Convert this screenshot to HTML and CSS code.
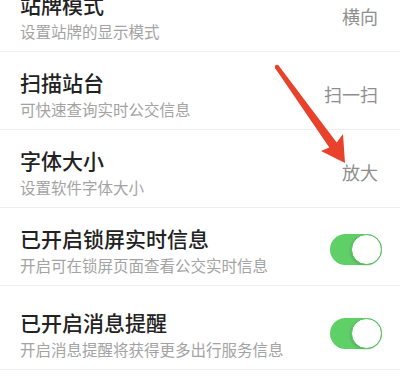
FILE: index.html
```html
<!DOCTYPE html>
<html lang="zh-CN">
<head>
<meta charset="utf-8">
<link rel="stylesheet" href="styles.css">
</head>
<body>
<div class="screen">
  <ul class="settings">
    <li class="row">
      <div class="text">
        <div class="title">站牌模式</div>
        <div class="sub">设置站牌的显示模式</div>
      </div>
      <span class="value">横向</span>
    </li>
    <li class="row">
      <div class="text">
        <div class="title">扫描站台</div>
        <div class="sub">可快速查询实时公交信息</div>
      </div>
      <span class="value">扫一扫</span>
    </li>
    <li class="row">
      <div class="text">
        <div class="title">字体大小</div>
        <div class="sub">设置软件字体大小</div>
      </div>
      <span class="value">放大</span>
    </li>
    <li class="row">
      <div class="text">
        <div class="title">已开启锁屏实时信息</div>
        <div class="sub">开启可在锁屏页面查看公交实时信息</div>
      </div>
      <span class="toggle on"><span class="knob"></span></span>
    </li>
    <li class="row row-last">
      <div class="text">
        <div class="title">已开启消息提醒</div>
        <div class="sub">开启消息提醒将获得更多出行服务信息</div>
      </div>
      <span class="toggle on"><span class="knob"></span></span>
    </li>
  </ul>
  <svg class="arrow" width="400" height="384" viewBox="0 0 400 384" aria-hidden="true">
    <circle cx="277" cy="67" r="2.2" fill="#e8412c"/>
    <polygon fill="#e8412c" points="275.2,68.3 278.8,65.7 336.7,142.4 343,134 345,163 321,151 329.3,147.6"/>
  </svg>
</div>
</body>
</html>
```
FILE: styles.css
```css
* { box-sizing: border-box; }
html, body {
  margin: 0;
  padding: 0;
  background: #ffffff;
}
body {
  font-family: "Noto Sans CJK SC", "Noto Sans", sans-serif;
  width: 400px;
  height: 384px;
  overflow: hidden;
}
.screen {
  position: relative;
  width: 400px;
  height: 384px;
  overflow: hidden;
}
.settings {
  list-style: none;
  margin: -26px 0 0 0;
  padding: 0;
}
.row {
  display: flex;
  align-items: center;
  justify-content: space-between;
  height: 78px;
  padding: 16px 18px 10px 20px;
  border-bottom: 1px solid #efefef;
}
.row-last {
  padding-top: 22px;
  height: 84px;
}
.text {
  display: flex;
  flex-direction: column;
}
.title {
  font-size: 21px;
  line-height: 27px;
  font-weight: 500;
  color: #222222;
}
.sub {
  margin-top: 3px;
  font-size: 15.5px;
  line-height: 20px;
  color: #a3a3a3;
}
.value {
  font-size: 18px;
  line-height: 22px;
  color: #8e8e8e;
  margin-right: 4px;
}
.toggle {
  position: relative;
  display: block;
  width: 52px;
  height: 31px;
  border-radius: 16px;
  background: #5fd068;
}
.knob {
  position: absolute;
  right: 0;
  top: 0;
  width: 31px;
  height: 31px;
  border-radius: 50%;
  background: #ffffff;
  border: 1.5px solid #55bd5e;
  box-shadow: -1px 1px 2px rgba(0,0,0,0.12);
}
.arrow {
  position: absolute;
  left: 0;
  top: 0;
  pointer-events: none;
}
```
